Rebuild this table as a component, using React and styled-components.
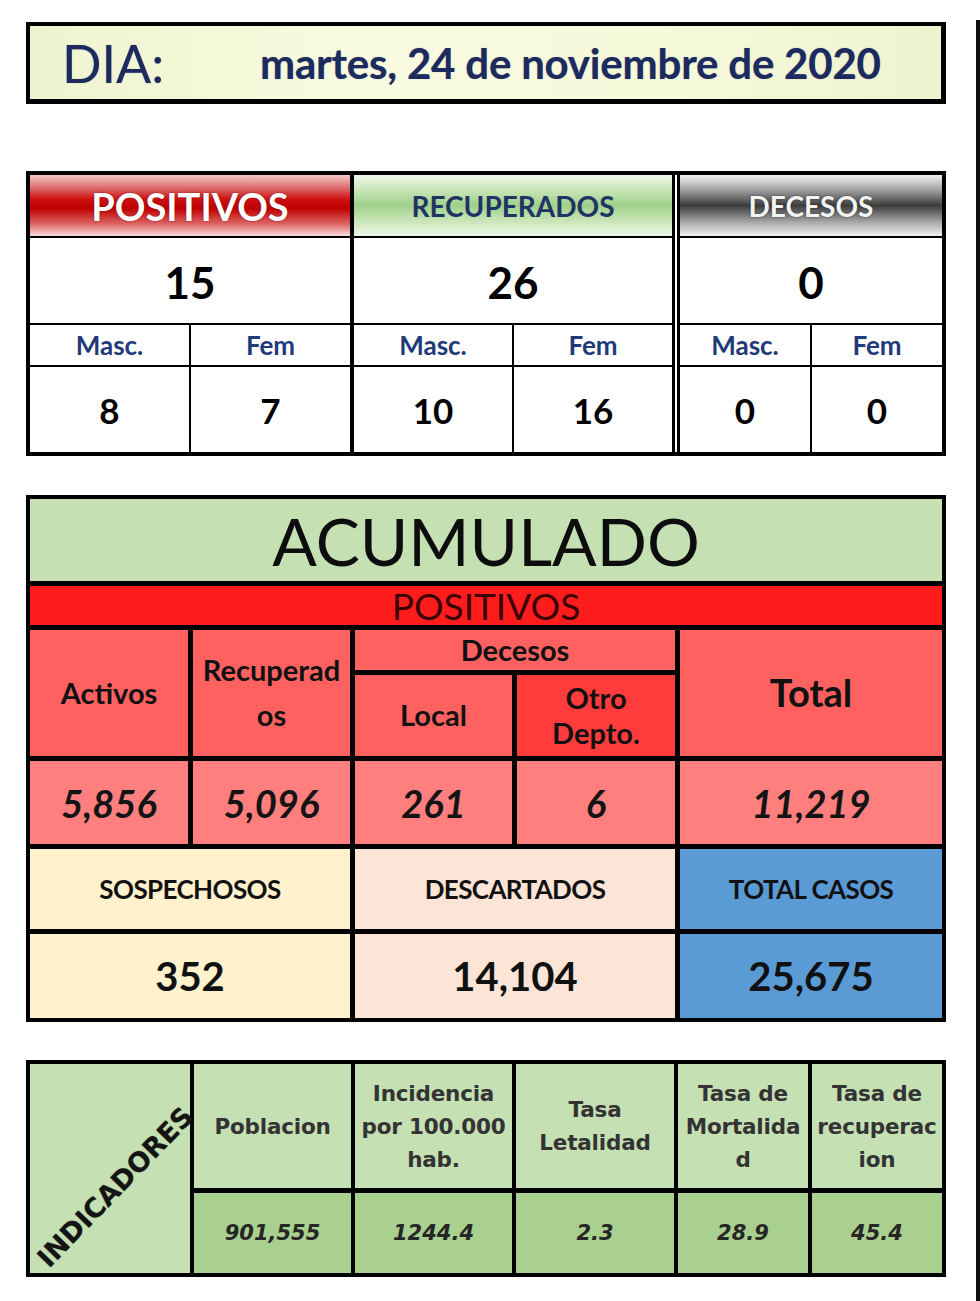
import React from "react";
import styled, { createGlobalStyle } from "styled-components";

const Global = createGlobalStyle`
  html, body { margin: 0; padding: 0; background: #fff; }
  body { font-family: Lato, "Open Sans", sans-serif; color: #000; }
`;

const Page = styled.div`
  display: flex;
  width: 980px;
  min-height: 1301px;
  box-sizing: border-box;
  padding-left: 26px;
`;

const Main = styled.main`
  width: 920px;
  display: flex;
  flex-direction: column;
  padding-top: 22px;
`;

const Rule = styled.div`
  width: 4px;
  margin-left: 30px;
  margin-top: 20px;
  background: #111;
`;

/* ---------- Day bar ---------- */
const DayBar = styled.header`
  height: 82px;
  box-sizing: border-box;
  border: 4px solid #000;
  border-right-width: 5px;
  border-bottom-width: 5px;
  background: linear-gradient(90deg, #eef3cf 0%, #f8fbdf 35%, #f6f9da 70%, #eef3cf 100%);
  display: flex;
  align-items: center;
  padding-left: 32px;
  color: #1c2a5e;
  text-shadow: 0 0 1px rgba(20, 30, 90, 0.45);
`;

const DayLabel = styled.span`
  width: 198px;
  font-size: 52px;
  font-weight: 400;
  line-height: 1;
`;

const DayDate = styled.span`
  font-size: 42px;
  font-weight: 700;
  line-height: 1;
  letter-spacing: -0.2px;
`;

/* ---------- Daily table ---------- */
const Daily = styled.section`
  margin-top: 67px;
  display: flex;
  border: 4px solid #000;
  background: #fff;
`;

const Group = styled.div`
  flex: 0 0 ${(p) => p.$w}px;
  box-sizing: border-box;
  display: grid;
  grid-template-columns: 1fr 1fr;
  grid-template-rows: 61px 85px 40px 85px;
  gap: 2px;
  background: #000;
  background-clip: padding-box;
  border-left: ${(p) => p.$edge || "none"};
`;

const GroupHead = styled.div`
  grid-column: 1 / -1;
  display: flex;
  align-items: center;
  justify-content: center;
  background: ${(p) => p.$bg};
  color: ${(p) => p.$color};
  font-weight: 700;
  font-size: ${(p) => p.$size}px;
  text-shadow: ${(p) => p.$shadow || "none"};
`;

const GroupTotal = styled.div`
  grid-column: 1 / -1;
  display: flex;
  align-items: center;
  justify-content: center;
  background: #fff;
  font-weight: 700;
  font-size: 44px;
  padding-top: 2px;
`;

const SexLabel = styled.div`
  display: flex;
  align-items: center;
  justify-content: center;
  background: #fff;
  color: #1f3a78;
  font-weight: 700;
  font-size: 26px;
`;

const SexValue = styled.div`
  display: flex;
  align-items: center;
  justify-content: center;
  background: #fff;
  font-weight: 700;
  font-size: 35px;
`;

/* ---------- Acumulado ---------- */
const Cumul = styled.section`
  margin-top: 39px;
  display: grid;
  grid-template-columns: 158px 157px 157px 158px 262px;
  grid-template-rows: 82px 39px 40px 81px 83px 80px 84px;
  gap: 5px;
  border: 4px solid #000;
  background: #000;
`;

const CumulTitle = styled.div`
  grid-column: 1 / -1;
  background: #c5e0b3;
  display: flex;
  align-items: center;
  justify-content: center;
  font-size: 66px;
  font-weight: 400;
  color: #0d0d0d;
`;

const CumulBand = styled.div`
  grid-column: 1 / -1;
  background: #ff1c1c;
  display: flex;
  align-items: center;
  justify-content: center;
  font-size: 37px;
  color: #3a0303;
  line-height: 1;
`;

const HeadCell = styled.div`
  grid-column: ${(p) => p.$col};
  grid-row: ${(p) => p.$row};
  background: ${(p) => p.$bg || "#ff6060"};
  display: flex;
  flex-direction: column;
  align-items: center;
  justify-content: center;
  text-align: center;
  font-weight: 700;
  font-size: ${(p) => p.$size || 29}px;
  line-height: ${(p) => p.$lh || 1.2};
  color: #111;
`;

const ValueCell = styled.div`
  background: #ff7f7f;
  display: flex;
  align-items: center;
  justify-content: center;
  font-weight: 700;
  font-style: italic;
  font-size: 38px;
  color: #141414;
`;

const SummaryHead = styled.div`
  grid-column: ${(p) => p.$col};
  background: ${(p) => p.$bg};
  display: flex;
  align-items: center;
  justify-content: center;
  font-weight: 700;
  font-size: 26px;
  letter-spacing: -0.6px;
  color: #111;
`;

const SummaryValue = styled(SummaryHead)`
  font-size: 40px;
  letter-spacing: 0;
`;

/* ---------- Indicadores ---------- */
const Ind = styled.section`
  margin-top: 38px;
  display: grid;
  grid-template-columns: 160px 157px 157px 158px 130px 130px;
  grid-template-rows: 124px 80px;
  gap: 5px 4px;
  border: 4px solid #000;
  background: #000;
  font-family: "DejaVu Sans", Verdana, sans-serif;
`;

const IndCorner = styled.div`
  grid-column: 1;
  grid-row: 1 / 3;
  background: #c5e0b3;
  position: relative;
`;

const IndCornerText = styled.span`
  position: absolute;
  left: 50%;
  top: 50%;
  transform: translate(-50%, -50%) translate(5px, 18px) rotate(-46deg);
  white-space: nowrap;
  font-weight: 700;
  font-size: 27px;
  color: #141414;
  text-shadow: 0 0 1px rgba(60, 70, 20, 0.5);
`;

const IndHead = styled.div`
  background: #c5e0b3;
  display: flex;
  align-items: center;
  justify-content: center;
  text-align: center;
  font-weight: 700;
  font-size: 21.5px;
  line-height: 33px;
  letter-spacing: -0.2px;
  color: #333;
`;

const IndValue = styled.div`
  background: #a9d08e;
  display: flex;
  align-items: center;
  justify-content: center;
  font-weight: 700;
  font-style: italic;
  font-size: 21px;
  color: #262626;
`;

const daily = [
  {
    title: "POSITIVOS",
    w: 320,
    bg: "linear-gradient(180deg,#f2c6c6 0%,#e07a7a 18%,#cc1010 40%,#c00000 55%,#dc6464 80%,#f7dcdc 100%)",
    color: "#fff",
    size: 38,
    shadow: "0 0 2px rgba(90,0,0,0.7)",
    total: 15,
    m: 8,
    f: 7,
  },
  {
    title: "RECUPERADOS",
    w: 322,
    edge: "4px solid #000",
    bg: "linear-gradient(180deg,#eef7e9 0%,#c8e5b8 25%,#9fd08a 50%,#c8e5b8 75%,#eef7e9 100%)",
    color: "#1f3464",
    size: 28,
    total: 26,
    m: 10,
    f: 16,
  },
  {
    title: "DECESOS",
    w: 270,
    edge: "8px double #000",
    bg: "linear-gradient(180deg,#f0f0f0 0%,#ababab 22%,#3c3c3c 50%,#ababab 78%,#f2f2f2 100%)",
    color: "#f4f4f4",
    size: 28,
    shadow: "0 0 2px rgba(0,0,0,0.6)",
    total: 0,
    m: 0,
    f: 0,
  },
];

const indicators = [
  { head: ["Poblacion"], value: "901,555" },
  { head: ["Incidencia", "por 100.000", "hab."], value: "1244.4" },
  { head: ["Tasa", "Letalidad"], value: "2.3" },
  { head: ["Tasa de", "Mortalida", "d"], value: "28.9" },
  { head: ["Tasa de", "recuperac", "ion"], value: "45.4" },
];

export default function App() {
  return (
    <>
      <Global />
      <Page>
        <Main>
          <DayBar>
            <DayLabel>DIA:</DayLabel>
            <DayDate>martes, 24 de noviembre de 2020</DayDate>
          </DayBar>

          <Daily>
            {daily.map((g) => (
              <Group key={g.title} $w={g.w} $edge={g.edge}>
                <GroupHead $bg={g.bg} $color={g.color} $size={g.size} $shadow={g.shadow}>
                  {g.title}
                </GroupHead>
                <GroupTotal>{g.total}</GroupTotal>
                <SexLabel>Masc.</SexLabel>
                <SexLabel>Fem</SexLabel>
                <SexValue>{g.m}</SexValue>
                <SexValue>{g.f}</SexValue>
              </Group>
            ))}
          </Daily>

          <Cumul>
            <CumulTitle>ACUMULADO</CumulTitle>
            <CumulBand>POSITIVOS</CumulBand>
            <HeadCell $col="1" $row="3 / 5">Activos</HeadCell>
            <HeadCell $col="2" $row="3 / 5" $lh={1.55}>
              <span>Recuperad</span>
              <span>os</span>
            </HeadCell>
            <HeadCell $col="3 / 5" $row="3">Decesos</HeadCell>
            <HeadCell $col="3" $row="4">Local</HeadCell>
            <HeadCell $col="4" $row="4" $bg="#ff3b3b">
              <span>Otro</span>
              <span>Depto.</span>
            </HeadCell>
            <HeadCell $col="5" $row="3 / 5" $size={38}>Total</HeadCell>
            <ValueCell>5,856</ValueCell>
            <ValueCell>5,096</ValueCell>
            <ValueCell>261</ValueCell>
            <ValueCell>6</ValueCell>
            <ValueCell>11,219</ValueCell>
            <SummaryHead $col="1 / 3" $bg="#fff2cc">SOSPECHOSOS</SummaryHead>
            <SummaryHead $col="3 / 5" $bg="#fce4d6">DESCARTADOS</SummaryHead>
            <SummaryHead $col="5" $bg="#5b9bd5">TOTAL CASOS</SummaryHead>
            <SummaryValue $col="1 / 3" $bg="#fff2cc">352</SummaryValue>
            <SummaryValue $col="3 / 5" $bg="#fce4d6">14,104</SummaryValue>
            <SummaryValue $col="5" $bg="#5b9bd5">25,675</SummaryValue>
          </Cumul>

          <Ind>
            <IndCorner>
              <IndCornerText>INDICADORES</IndCornerText>
            </IndCorner>
            {indicators.map((it) => (
              <IndHead key={it.value}>
                <div>
                  {it.head.map((line, i) => (
                    <div key={i}>{line}</div>
                  ))}
                </div>
              </IndHead>
            ))}
            {indicators.map((it) => (
              <IndValue key={it.value}>{it.value}</IndValue>
            ))}
          </Ind>
        </Main>
        <Rule />
      </Page>
    </>
  );
}
